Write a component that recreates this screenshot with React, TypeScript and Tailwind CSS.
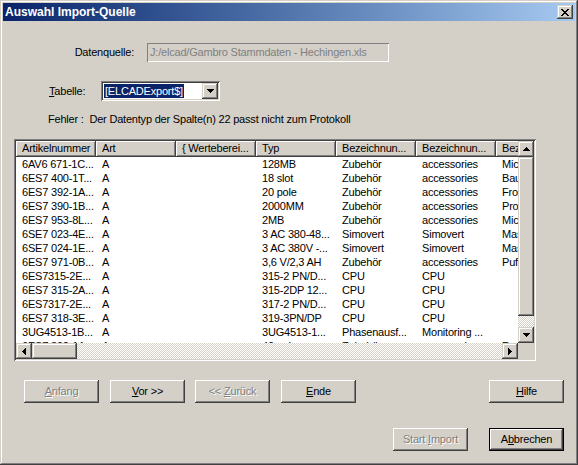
const FONT = "font-['Liberation_Sans',Arial,sans-serif]"

// Win2000 3D edges
const RAISED =
  'shadow-[inset_-1px_-1px_0_#404040,inset_1px_1px_0_#ffffff,inset_-2px_-2px_0_#808080,inset_2px_2px_0_#d4d0c8]'
const RAISED_SB =
  'shadow-[inset_-1px_-1px_0_#404040,inset_1px_1px_0_#d4d0c8,inset_-2px_-2px_0_#808080,inset_2px_2px_0_#ffffff]'
const RAISED_HDR = 'shadow-[inset_-1px_-1px_0_#404040,inset_1px_1px_0_#ffffff,inset_-2px_-2px_0_#808080]'
const SUNKEN =
  'shadow-[inset_1px_1px_0_#808080,inset_-1px_-1px_0_#ffffff,inset_2px_2px_0_#404040,inset_-2px_-2px_0_#d4d0c8]'
const DITHER = 'bg-[image:repeating-conic-gradient(#d4d0c8_0%_25%,#ffffff_0%_50%)] bg-[length:2px_2px]'
const DISABLED = 'text-[#808080] [text-shadow:1px_1px_0_#ffffff]'

const HEADERS = ['Artikelnummer', 'Art', '{ Werteberei...', 'Typ', 'Bezeichnun...', 'Bezeichnun...', 'Bezeichnung']

const ROWS = [
  ['6AV6 671-1C...', 'A', '', '128MB', 'Zubehör', 'accessories', 'Micro Memory Card'],
  ['6ES7 400-1T...', 'A', '', '18 slot', 'Zubehör', 'accessories', 'Baugruppenträger'],
  ['6ES7 392-1A...', 'A', '', '20 pole', 'Zubehör', 'accessories', 'Frontstecker'],
  ['6ES7 390-1B...', 'A', '', '2000MM', 'Zubehör', 'accessories', 'Profilschiene'],
  ['6ES7 953-8L...', 'A', '', '2MB', 'Zubehör', 'accessories', 'Micro Memory Card'],
  ['6SE7 023-4E...', 'A', '', '3 AC 380-48...', 'Simovert', 'Simovert', 'MasterDrive'],
  ['6SE7 024-1E...', 'A', '', '3 AC 380V -...', 'Simovert', 'Simovert', 'MasterDrive'],
  ['6ES7 971-0B...', 'A', '', '3,6 V/2,3 AH', 'Zubehör', 'accessories', 'Pufferbatterie'],
  ['6ES7315-2E...', 'A', '', '315-2 PN/D...', 'CPU', 'CPU', ''],
  ['6ES7 315-2A...', 'A', '', '315-2DP 12...', 'CPU', 'CPU', ''],
  ['6ES7317-2E...', 'A', '', '317-2 PN/D...', 'CPU', 'CPU', ''],
  ['6ES7 318-3E...', 'A', '', '319-3PN/DP', 'CPU', 'CPU', ''],
  ['3UG4513-1B...', 'A', '', '3UG4513-1...', 'Phasenausf...', 'Monitoring ...', ''],
  ['6ES7 392-1A...', 'A', '', '40 pole', 'Zubehör', 'accessories', 'Frontstecker'],
]

function Arrow({ dir }: { dir: 'up' | 'down' | 'left' | 'right' }) {
  if (dir === 'up' || dir === 'down') {
    const d =
      dir === 'up'
        ? 'M3 0h1v1H3zM2 1h3v1H2zM1 2h5v1H1zM0 3h7v1H0z'
        : 'M0 0h7v1H0zM1 1h5v1H1zM2 2h3v1H2zM3 3h1v1H3z'
    return (
      <svg width="7" height="4" viewBox="0 0 7 4" shapeRendering="crispEdges">
        <path d={d} fill="#000" />
      </svg>
    )
  }
  const d =
    dir === 'left'
      ? 'M3 0h1v7H3zM2 1h1v5H2zM1 2h1v3H1zM0 3h1v1H0z'
      : 'M0 0h1v7H0zM1 1h1v5H1zM2 2h1v3H2zM3 3h1v1H3z'
  return (
    <svg width="4" height="7" viewBox="0 0 4 7" shapeRendering="crispEdges">
      <path d={d} fill="#000" />
    </svg>
  )
}

function SbButton({ dir }: { dir: 'up' | 'down' | 'left' | 'right' }) {
  return (
    <div className={`w-[16px] h-[16px] shrink-0 bg-[#d4d0c8] flex items-center justify-center ${RAISED_SB}`}>
      <Arrow dir={dir} />
    </div>
  )
}

function Button({
  children,
  disabled,
  isDefault,
}: {
  children: React.ReactNode
  disabled?: boolean
  isDefault?: boolean
}) {
  return (
    <div
      className={`w-[75px] h-[23px] shrink-0 flex items-center justify-center text-[11px] bg-[#d4d0c8] ${RAISED} ${
        isDefault ? 'border border-black' : ''
      } ${disabled ? DISABLED : 'text-black'}`}
    >
      <span className="whitespace-pre">{children}</span>
    </div>
  )
}

export default function App() {
  return (
    <div
      className={`${FONT} w-[578px] h-[465px] bg-[#d4d0c8] p-[3px] flex flex-col text-[11px] tracking-[-0.2px] text-black shadow-[inset_-1px_-1px_0_#404040,inset_1px_1px_0_#d4d0c8,inset_-2px_-2px_0_#808080,inset_2px_2px_0_#ffffff]`}
    >
      {/* title bar */}
      <div className="h-[18px] shrink-0 flex items-center bg-linear-to-r from-[#0a246a] to-[#a6caf0] pl-[2px] pr-[2px]">
        <span className="text-white font-bold text-[12px] tracking-normal leading-none">Auswahl Import-Quelle</span>
        <div className={`ml-auto w-[16px] h-[14px] bg-[#d4d0c8] flex items-center justify-center ${RAISED_SB}`}>
          <svg width="8" height="7" viewBox="0 0 8 7" shapeRendering="crispEdges">
            <path
              d="M0 0h2v1H0zM6 0h2v1H6zM1 1h2v1H1zM5 1h2v1H5zM2 2h4v1H2zM3 3h2v1H3zM2 4h4v1H2zM1 5h2v1H1zM5 5h2v1H5zM0 6h2v1H0zM6 6h2v1H6z"
              fill="#000"
            />
          </svg>
        </div>
      </div>

      {/* Datenquelle */}
      <div className="mt-[22px] h-[19px] flex items-center">
        <div className="w-[131px] text-right">Datenquelle:</div>
        <div className="ml-[13px] w-[242px] h-[19px] flex items-center pl-[3px] text-[#808080] whitespace-nowrap overflow-hidden shadow-[inset_1px_1px_0_#808080,inset_-1px_-1px_0_#ffffff]">
          J:/elcad/Gambro Stammdaten - Hechingen.xls
        </div>
      </div>

      {/* Tabelle */}
      <div className="mt-[19px] h-[20px] flex items-center">
        <div className="ml-[46px] w-[52px]">
          <span className="underline">T</span>abelle:
        </div>
        <div className={`w-[119px] h-[20px] bg-white flex items-center p-[2px] ${SUNKEN}`}>
          <span className="ml-[1px] px-[1px] bg-[#0a246a] text-white leading-[14px] whitespace-nowrap">[ELCADExport$]</span>
          <div className="ml-auto">
            <SbButton dir="down" />
          </div>
        </div>
      </div>

      {/* Fehler */}
      <div className="mt-[12px] ml-[45px] leading-[13px] whitespace-pre">
        Fehler :  Der Datentyp der Spalte(n) 22 passt nicht zum Protokoll
      </div>

      {/* list view */}
      <div className={`mt-[13px] ml-[11px] w-[522px] h-[222px] p-[2px] bg-white shrink-0 ${SUNKEN}`}>
        <div className="flex flex-col w-[518px] h-[218px]">
          <div className="flex h-[202px]">
            <div className="w-[502px] overflow-hidden bg-white">
              <div className="flex h-[16px]">
                {HEADERS.map((h, i) => (
                  <div
                    key={i}
                    className={`w-[80px] shrink-0 h-[16px] bg-[#d4d0c8] pl-[6px] leading-[15px] whitespace-nowrap overflow-hidden ${RAISED_HDR}`}
                  >
                    {h}
                  </div>
                ))}
              </div>
              {ROWS.map((r, ri) => (
                <div key={ri} className="flex h-[14px]">
                  {r.map((c, ci) => (
                    <div key={ci} className="w-[80px] shrink-0 pl-[6px] leading-[14px] whitespace-nowrap overflow-hidden">
                      {c}
                    </div>
                  ))}
                </div>
              ))}
            </div>
            {/* vertical scrollbar */}
            <div className="w-[16px] flex flex-col">
              <SbButton dir="up" />
              <div className={`h-[159px] bg-[#d4d0c8] ${RAISED_SB}`} />
              <div className={`h-[11px] ${DITHER}`} />
              <SbButton dir="down" />
            </div>
          </div>
          {/* horizontal scrollbar */}
          <div className="flex h-[16px]">
            <SbButton dir="left" />
            <div className={`w-[45px] h-[16px] bg-[#d4d0c8] ${RAISED_SB}`} />
            <div className={`w-[425px] h-[16px] ${DITHER}`} />
            <SbButton dir="right" />
            <div className="w-[16px] h-[16px] bg-[#d4d0c8]" />
          </div>
        </div>
      </div>

      {/* button row 1 */}
      <div className="mt-[19px] flex pl-[21px] pr-[11px]">
        <Button disabled>
          <span className="underline">A</span>nfang
        </Button>
        <div className="ml-[11px]">
          <Button>
            <span className="underline">V</span>or &gt;&gt;
          </Button>
        </div>
        <div className="ml-[10px]">
          <Button disabled>
            &lt;&lt; <span className="underline">Z</span>urück
          </Button>
        </div>
        <div className="ml-[11px]">
          <Button>
            <span className="underline">E</span>nde
          </Button>
        </div>
        <div className="ml-auto">
          <Button>
            <span className="underline">H</span>ilfe
          </Button>
        </div>
      </div>

      {/* button row 2 */}
      <div className="mt-[25px] flex justify-end pr-[11px] gap-[21px]">
        <Button disabled>
          Start <span className="underline">I</span>mport
        </Button>
        <Button isDefault>
          A<span className="underline">b</span>brechen
        </Button>
      </div>
    </div>
  )
}
